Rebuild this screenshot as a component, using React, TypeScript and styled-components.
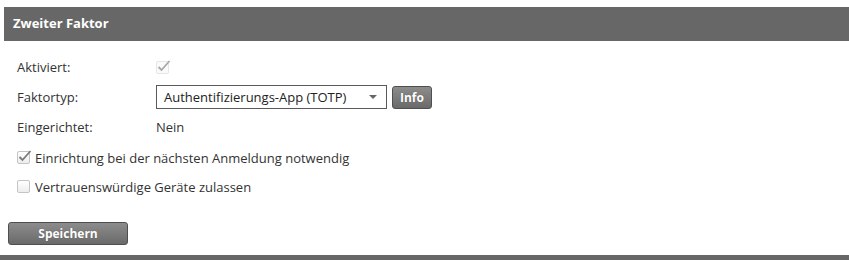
import * as React from 'react'
import styled, {createGlobalStyle} from 'styled-components'

const Global = createGlobalStyle`
  html, body {
    margin: 0;
    padding: 0;
    background: #fff;
  }
  body {
    font-family: "Open Sans", "DejaVu Sans", sans-serif;
    font-size: 13px;
    color: #333;
  }
`

const Page = styled.div`
  padding-top: 7px;
`

const Section = styled.section`
  margin-left: 4px;
`

const Header = styled.h2`
  margin: 0;
  height: 34px;
  line-height: 33px;
  padding: 0 9px;
  background: #676767;
  color: #fff;
  font-size: 13px;
  font-weight: bold;
`

const Body = styled.div`
  padding: 11px 0 0 13px;
`

const Grid = styled.div`
  display: grid;
  grid-template-columns: 139px auto;
  grid-auto-rows: 30px;
  align-items: center;
`

const Label = styled.div`
  line-height: 18px;
`

const Value = styled.div`
  display: flex;
  align-items: center;
  gap: 5px;
`

const Box = styled.span<{$checked?: boolean; $disabled?: boolean}>`
  position: relative;
  display: inline-block;
  box-sizing: border-box;
  width: 13px;
  height: 13px;
  border: 1px solid ${p => (p.$disabled ? '#e6e6e6' : '#c4c4c4')};
  border-radius: 2px;
  background: ${p => (p.$disabled ? '#fafafa' : 'linear-gradient(#fff, #ededed)')};
  flex: none;
`

const Tick = styled.svg`
  position: absolute;
  left: 0;
  top: -3px;
`

const CheckBox = ({checked, disabled}: {checked?: boolean; disabled?: boolean}) => (
  <Box $checked={checked} $disabled={disabled}>
    {checked && (
      <Tick width="14" height="14" viewBox="0 0 14 14">
        <path d="M1.5 8 L4.5 11 L12.5 2" fill="none" stroke={disabled ? '#a8a8a8' : '#7a7a7a'} strokeWidth="1.8" />
      </Tick>
    )}
  </Box>
)

const Select = styled.div`
  box-sizing: border-box;
  width: 231px;
  height: 24px;
  border: 1px solid #5a5a5a;
  display: flex;
  align-items: center;
  justify-content: space-between;
  padding: 0 9px 0 7px;
  color: #222;
`

const Caret = styled.span`
  width: 0;
  height: 0;
  border-left: 4px solid transparent;
  border-right: 4px solid transparent;
  border-top: 4px solid #666;
`

const Button = styled.button<{$width?: number}>`
  box-sizing: border-box;
  width: ${p => (p.$width ? `${p.$width}px` : 'auto')};
  height: 23px;
  padding: 0 7px;
  border: 1px solid #4f4f4f;
  border-radius: 3px;
  background: linear-gradient(#8c8c8c, #6a6a6a);
  color: #fff;
  font-family: "Open Sans", "DejaVu Sans", sans-serif;
  font-size: 12px;
  font-weight: bold;
  text-shadow: 0 0 1px rgba(0, 0, 0, 0.3);
  cursor: pointer;
`

const OptionRow = styled.label`
  height: 29px;
  display: flex;
  align-items: center;
  gap: 5px;
  line-height: 18px;
`

const Options = styled.div`
  padding-top: 1px;
`

const Actions = styled.div`
  padding-top: 21px;
  margin-left: -13px;
  padding-left: 4px;
`

const BottomBar = styled.div`
  margin-top: 10px;
  height: 6px;
  background: #676767;
`

const App = () => {
  return (
    <Page>
      <Global />
      <Section>
        <Header>Zweiter Faktor</Header>
        <Body>
          <Grid>
            <Label>Aktiviert:</Label>
            <Value>
              <CheckBox checked disabled />
            </Value>
            <Label>Faktortyp:</Label>
            <Value>
              <Select>
                <span>Authentifizierungs-App (TOTP)</span>
                <Caret />
              </Select>
              <Button>Info</Button>
            </Value>
            <Label>Eingerichtet:</Label>
            <Value>Nein</Value>
          </Grid>
          <Options>
            <OptionRow>
              <CheckBox checked />
              Einrichtung bei der nächsten Anmeldung notwendig
            </OptionRow>
            <OptionRow>
              <CheckBox />
              Vertrauenswürdige Geräte zulassen
            </OptionRow>
          </Options>
          <Actions>
            <Button $width={120}>Speichern</Button>
          </Actions>
        </Body>
      </Section>
      <BottomBar />
    </Page>
  )
}

export default App
